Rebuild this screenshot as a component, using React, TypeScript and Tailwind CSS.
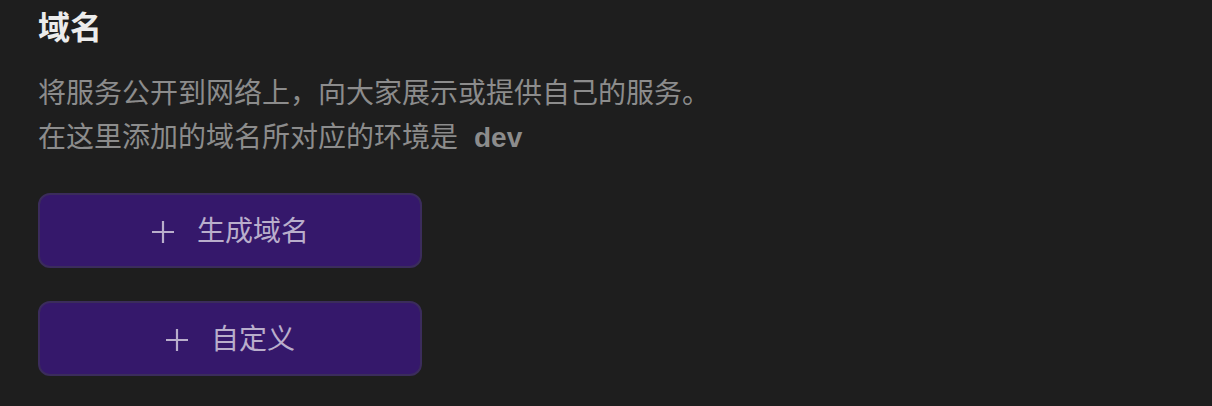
function PlusIcon() {
  return (
    <svg width="24" height="24" viewBox="0 0 24 24" fill="none" stroke="currentColor" strokeWidth="2.2">
      <path d="M12 1v22M1 12h22" />
    </svg>
  );
}

function ActionButton({ label }: { label: string }) {
  return (
    <button className="flex h-[75px] w-[384px] items-center justify-center gap-[22px] rounded-[12px] border-2 border-[#3b2c5c] bg-[#35186b] pt-[3px] text-[28px] leading-none text-[#b9aecb]">
      <PlusIcon />
      <span>{label}</span>
    </button>
  );
}

export default function App() {
  return (
    <div
      className="min-h-[406px] w-full bg-[#1e1e1e] pl-[38px] pt-2"
      style={{ fontFamily: '"Liberation Sans", "Noto Sans CJK SC", sans-serif' }}
    >
      {/* Header */}
      <h1 className="text-[32px] font-bold leading-[40px] text-[#ececec]">域名</h1>

      {/* Description */}
      <div className="mt-[24px] text-[28px] leading-[44px] text-[#8c8c8c]">
        <p>将服务公开到网络上，向大家展示或提供自己的服务。</p>
        <p>
          在这里添加的域名所对应的环境是
          <span className="ml-4 font-bold">dev</span>
        </p>
      </div>

      {/* Actions */}
      <div className="mt-[33px] flex flex-col gap-[33px]">
        <ActionButton label="生成域名" />
        <ActionButton label="自定义" />
      </div>
    </div>
  );
}
